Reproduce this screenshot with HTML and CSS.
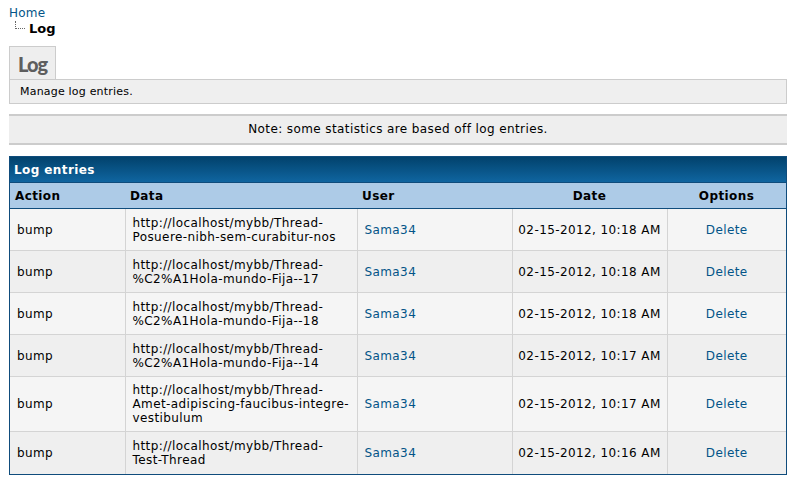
FILE: index.html
```html
<!DOCTYPE html>
<html>
<head>
<meta charset="utf-8">
<link rel="stylesheet" href="styles.css">
</head>
<body>
<div class="breadcrumb">
  <a href="#" class="crumb-home">Home</a>
  <div class="crumb-current"><span class="tree"></span><span>Log</span></div>
</div>
<div class="tabs"><div class="tab">Log</div></div>
<div class="tab-desc">Manage log entries.</div>
<div class="notice">Note: some statistics are based off log entries.</div>
<div class="border-wrap">
  <div class="thead">Log entries</div>
  <table class="general">
    <colgroup>
      <col style="width:115px"><col style="width:232px"><col style="width:155px"><col style="width:155px"><col>
    </colgroup>
    <tr class="head">
      <th class="l">Action</th><th class="l">Data</th><th class="l">User</th><th>Date</th><th>Options</th>
    </tr>
    <tr class="alt1"><td>bump</td><td>http://localhost/mybb/Thread-<br>Posuere-nibh-sem-curabitur-nos</td><td><a href="#">Sama34</a></td><td class="c">02-15-2012, 10:18 AM</td><td class="c"><a href="#">Delete</a></td></tr>
    <tr class="alt2"><td>bump</td><td>http://localhost/mybb/Thread-<br>%C2%A1Hola-mundo-Fija--17</td><td><a href="#">Sama34</a></td><td class="c">02-15-2012, 10:18 AM</td><td class="c"><a href="#">Delete</a></td></tr>
    <tr class="alt1"><td>bump</td><td>http://localhost/mybb/Thread-<br>%C2%A1Hola-mundo-Fija--18</td><td><a href="#">Sama34</a></td><td class="c">02-15-2012, 10:18 AM</td><td class="c"><a href="#">Delete</a></td></tr>
    <tr class="alt2"><td>bump</td><td>http://localhost/mybb/Thread-<br>%C2%A1Hola-mundo-Fija--14</td><td><a href="#">Sama34</a></td><td class="c">02-15-2012, 10:17 AM</td><td class="c"><a href="#">Delete</a></td></tr>
    <tr class="alt1"><td>bump</td><td>http://localhost/mybb/Thread-<br>Amet-adipiscing-faucibus-integre-<br>vestibulum</td><td><a href="#">Sama34</a></td><td class="c">02-15-2012, 10:17 AM</td><td class="c"><a href="#">Delete</a></td></tr>
    <tr class="alt2 last"><td>bump</td><td>http://localhost/mybb/Thread-<br>Test-Thread</td><td><a href="#">Sama34</a></td><td class="c">02-15-2012, 10:16 AM</td><td class="c"><a href="#">Delete</a></td></tr>
  </table>
</div>
</body>
</html>
```

FILE: styles.css
```css
html, body { margin: 0; padding: 0; background: #fff; }
body {
  padding: 6px 10px 0 9px;
  font-family: "DejaVu Sans", Verdana, sans-serif;
  font-size: 12px;
  letter-spacing: 0.4px;
  color: #000;
}
a { color: #035488; text-decoration: none; }

.breadcrumb { line-height: 15px; font-size: 12px; letter-spacing: 0.2px; }
.crumb-home { display: block; }
.crumb-current { display: flex; align-items: flex-start; font-weight: bold; font-size: 13px; letter-spacing: 0; }
.tree {
  width: 9px; height: 7px;
  margin: 0 4px 0 6px;
  border-left: 1px dotted #666;
  border-bottom: 1px dotted #666;
}

.tabs { margin-top: 10px; display: flex; }
.tab {
  border: 1px solid #ccc;
  border-bottom: none;
  background: #eee;
  color: #5e5e5e;
  font-family: "Lato", "DejaVu Sans", sans-serif;
  font-weight: 900;
  font-size: 20px;
  letter-spacing: -1px;
  line-height: 34px;
  padding-left: 2px;
  box-sizing: border-box;
  width: 47px;
  height: 33px;
  text-indent: 6px;
}
.tab-desc {
  border: 1px solid #ccc;
  background: #efefef;
  height: 25px;
  box-sizing: border-box;
  padding: 5px 0 0 10px;
  font-size: 11px;
  letter-spacing: 0.2px;
  color: #000;
}
.notice {
  margin-top: 10px;
  border-top: 2px solid #ccc;
  border-bottom: 2px solid #ccc;
  background: #eee;
  height: 31px;
  box-sizing: border-box;
  text-align: center;
  font-size: 12px;
  line-height: 27px;
}
.border-wrap {
  margin-top: 11px;
  border: 1px solid #0f4c7c;
}
.thead {
  height: 25px;
  background: linear-gradient(#02426c, #0f65a0);
  color: #fff;
  font-weight: bold;
  font-size: 12px;
  line-height: 26px;
  padding-left: 4px;
}
table.general {
  width: 100%;
  border-collapse: collapse;
  table-layout: fixed;
  font-size: 12px;
}
tr.head th {
  background: #adcbe7;
  height: 25px;
  border-top: 1px solid #0f4c7c;
  border-bottom: 1px solid #0f4c7c;
  text-align: center;
  font-weight: bold;
  padding: 0 5px;
}
tr.head th.l { text-align: left; }
td {
  border-right: 1px solid #d4d4d4;
  border-bottom: 1px solid #d4d4d4;
  padding: 6px 7px;
  line-height: 14px;
  height: 29px;
  vertical-align: middle;
}
td:last-child { border-right: none; }
tr.last td { border-bottom: none; height: 30px; }
td.c { text-align: center; white-space: nowrap; padding-left: 0; padding-right: 0; }
tr.alt1 td { background: #f5f5f5; }
tr.alt2 td { background: #efefef; }
```
